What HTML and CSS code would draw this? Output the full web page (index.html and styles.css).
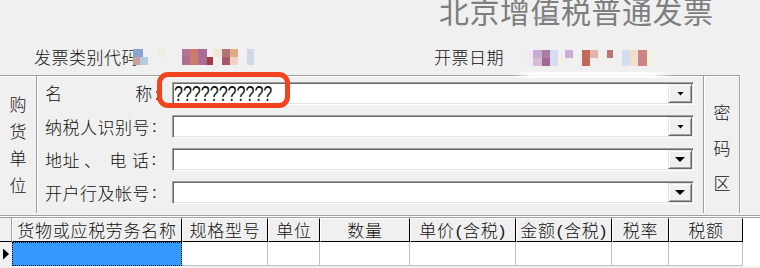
FILE: index.html
```html
<!DOCTYPE html>
<html lang="zh-CN">
<head>
<meta charset="utf-8">
<title>北京增值税普通发票</title>
<link rel="stylesheet" href="styles.css">
</head>
<body>
<div class="page">
  <div class="title-row">
    <h1 class="title">北京增<span class="zhi">值</span>税普通发票</h1>
  </div>

  <div class="info-row">
    <span class="code-label">发票类别代码</span>
    <svg class="mosaic-code" width="125" height="16" viewBox="0 0 125 16">
      <rect x="0" y="0" width="10" height="8" fill="#86a4cc"/>
      <rect x="0" y="8" width="7" height="8" fill="#c8a09c"/>
      <rect x="7" y="8" width="8" height="8" fill="#b4cce4"/>
      <rect x="25" y="0" width="8" height="8" fill="#eeeedc"/>
      <rect x="49" y="0" width="8" height="8" fill="#b47496"/>
      <rect x="49" y="8" width="8" height="8" fill="#b06c8c"/>
      <rect x="57" y="0" width="8" height="16" fill="#cc7c6c"/>
      <rect x="65" y="0" width="9" height="16" fill="#aa6c94"/>
      <rect x="74" y="8" width="6" height="8" fill="#a23c44"/>
      <rect x="80" y="0" width="9" height="8" fill="#f2e6d6"/>
      <rect x="89" y="0" width="8" height="8" fill="#b47474"/>
      <rect x="89" y="8" width="8" height="8" fill="#a85868"/>
      <rect x="97" y="0" width="8" height="8" fill="#e2a882"/>
      <rect x="97" y="8" width="8" height="8" fill="#eed4c4"/>
      <rect x="114" y="0" width="7" height="16" fill="#d2d8ea"/>
    </svg>
    <span class="date-label">开票日期</span>
    <svg class="mosaic-date" width="130" height="16" viewBox="0 0 130 16">
      <rect x="0" y="0" width="6" height="16" fill="#f2eaf2"/>
      <rect x="6" y="0" width="9" height="8" fill="#c4acd4"/>
      <rect x="6" y="8" width="9" height="8" fill="#d4bcd4"/>
      <rect x="15" y="0" width="8" height="8" fill="#ac7ca4"/>
      <rect x="15" y="8" width="8" height="8" fill="#a26892"/>
      <rect x="23" y="0" width="8" height="16" fill="#d4dcf2"/>
      <rect x="31" y="8" width="7" height="8" fill="#f2f2e2"/>
      <rect x="38" y="0" width="8" height="8" fill="#ccacd4"/>
      <rect x="55" y="0" width="8" height="16" fill="#c46858"/>
      <rect x="63" y="0" width="8" height="8" fill="#e4b4ac"/>
      <rect x="80" y="0" width="6" height="8" fill="#bc7474"/>
      <rect x="95" y="0" width="8" height="16" fill="#d4dcf2"/>
      <rect x="103" y="0" width="8" height="8" fill="#f2dec8"/>
      <rect x="103" y="8" width="8" height="8" fill="#f2e2cc"/>
      <rect x="111" y="0" width="9" height="16" fill="#cc8488"/>
      <rect x="120" y="0" width="6" height="16" fill="#f2f2de"/>
    </svg>
  </div>

  <div class="form-box">
    <div class="buyer">
      <span>购</span><span>货</span><span>单</span><span>位</span>
    </div>
    <div class="fields">
      <div class="field">
        <span class="label spread"><span>名</span><span>称<span class="colon">:</span></span></span>
        <div class="combo">
          <span class="combo-text"><span class="qs">???????????</span></span>
          <span class="drop"><span class="arr"></span></span>
        </div>
      </div>
      <div class="field">
        <span class="label"><span>纳税人识别号</span><span class="colon">:</span></span>
        <div class="combo">
          <span class="combo-text"></span>
          <span class="drop"><span class="arr"></span></span>
        </div>
      </div>
      <div class="field">
        <span class="label"><span>地址</span><span class="dun">、</span><span class="g1">电</span><span class="g2">话</span><span class="colon">:</span></span>
        <div class="combo">
          <span class="combo-text"></span>
          <span class="drop"><span class="arr big"></span></span>
        </div>
      </div>
      <div class="field">
        <span class="label"><span>开户行及帐号</span><span class="colon">:</span></span>
        <div class="combo">
          <span class="combo-text"></span>
          <span class="drop"><span class="arr big"></span></span>
        </div>
      </div>
    </div>
    <div class="cipher">
      <span>密</span><span>码</span><span>区</span>
    </div>
  </div>

  <div class="grid-sep"></div>
  <div class="grid">
    <div class="ih"></div>
    <div class="hc">货物或应税劳务名称</div>
    <div class="hc">规格型号</div>
    <div class="hc">单位</div>
    <div class="hc">数量</div>
    <div class="hc">单价<span class="p">(</span>含税<span class="p">)</span></div>
    <div class="hc">金额<span class="p">(</span>含税<span class="p">)</span></div>
    <div class="hc">税率</div>
    <div class="hc">税额</div>
    <div class="he"></div>

    <div class="id"><span class="tri"></span></div>
    <div class="dc sel"></div>
    <div class="dc"></div>
    <div class="dc"></div>
    <div class="dc"></div>
    <div class="dc"></div>
    <div class="dc"></div>
    <div class="dc"></div>
    <div class="dc"></div>
    <div class="de"></div>
  </div>

  <div class="streak"></div>
  <div class="annot"></div>
</div>
</body>
</html>
```

FILE: styles.css
```css
html, body {
  margin: 0;
  padding: 0;
}
body {
  background: #f0f0f0;
  width: 760px;
  height: 268px;
  overflow: hidden;
  font-family: "Noto Sans CJK SC", "Noto Sans", sans-serif;
  font-weight: 300;
  color: #111;
}
.page {
  position: relative;
  width: 760px;
  height: 268px;
  overflow: hidden;
}

/* title */
.title-row {
  display: flex;
  height: 30px;
  padding-left: 439px;
}
.title {
  margin: -5px 0 0;
  height: 30px;
  font-size: 30px;
  line-height: 30px;
  font-weight: 400;
  color: #7e7e7e;
  letter-spacing: 0.5px;
  white-space: nowrap;
}
.zhi {
  position: relative;
}
.zhi::after {
  content: "";
  position: absolute;
  left: 3px;
  top: 29px;
  width: 24px;
  height: 2px;
  background: linear-gradient(90deg, #8c8c8c, #d0d0d0);
}

/* info row */
.info-row {
  display: flex;
  align-items: flex-start;
  height: 45px;
  box-sizing: border-box;
  padding: 18px 0 0 34px;
  font-size: 17px;
  line-height: 17px;
  letter-spacing: 0.5px;
}
.code-label {
  width: 99px;
  white-space: nowrap;
}
.mosaic-code {
  display: block;
  margin-top: 1px;
  flex: none;
}
.date-label {
  margin-left: 176px;
  width: 93px;
  white-space: nowrap;
}
.mosaic-date {
  display: block;
  margin-top: 2px;
  flex: none;
}

/* form box */
.form-box {
  display: flex;
  width: 740px;
  height: 138px;
  box-sizing: border-box;
  border-top: 1px solid #a0a0a0;
  box-shadow: inset 0 1px #fff;
}
.buyer {
  width: 37px;
  box-sizing: border-box;
  border-right: 1px solid #a0a0a0;
  display: flex;
  flex-direction: column;
  align-items: center;
  justify-content: center;
  padding-bottom: 2px;
  font-size: 17px;
  line-height: 27px;
}
.fields {
  width: 667px;
  box-sizing: border-box;
  border-left: 1px solid #fff;
  border-right: 1px solid #a0a0a0;
  padding: 6px 0 0 7px;
  display: flex;
  flex-direction: column;
  gap: 10px;
}
.field {
  display: flex;
  align-items: center;
  height: 23px;
}
.label {
  width: 115px;
  margin-right: 12px;
  display: flex;
  font-size: 17px;
  line-height: 20px;
  letter-spacing: 0.5px;
  white-space: nowrap;
}
.label.spread {
  justify-content: space-between;
}
.colon {
  font-family: "Liberation Sans", sans-serif;
  margin-left: 2px;
}
.dun {
  padding-left: 4px;
}
.g1 {
  margin-left: 8px;
}
.g2 {
  margin-left: 5px;
}
.combo {
  width: 522px;
  height: 23px;
  box-sizing: border-box;
  display: flex;
  background: #fff;
  border: 1px solid;
  border-color: #a0a0a0 #fff #fff #a0a0a0;
  box-shadow: inset 1px 1px #696969, inset -1px -1px #e3e3e3;
  padding: 1px;
}
.combo-text {
  flex: 1;
  overflow: hidden;
  font-family: "Liberation Sans", sans-serif;
  font-weight: 400;
  font-size: 22px;
  line-height: 19px;
  white-space: nowrap;
}
.qs {
  display: inline-block;
  transform: scaleX(0.73);
  transform-origin: 0 50%;
}
.drop {
  width: 24px;
  flex: none;
  box-sizing: border-box;
  background: #f0f0f0;
  border: 1px solid;
  border-color: #e3e3e3 #696969 #696969 #e3e3e3;
  box-shadow: inset 1px 1px #fff, inset -1px -1px #a0a0a0;
  display: flex;
  align-items: center;
  justify-content: center;
}
.arr {
  width: 7px;
  height: 4px;
  background: #000;
  clip-path: polygon(0 0, 100% 0, 50% 100%);
  margin-left: 1px;
}
.arr.big {
  width: 10px;
  height: 5px;
  margin-left: 0;
}
.cipher {
  width: 36px;
  box-sizing: border-box;
  border-left: 1px solid #fff;
  border-right: 1px solid #a0a0a0;
  box-shadow: 1px 0 #fff;
  display: flex;
  flex-direction: column;
  align-items: center;
  justify-content: center;
  padding-top: 6px;
  font-size: 17px;
  line-height: 35.5px;
}

/* grid */
.grid-sep {
  margin-top: 2px;
  height: 3px;
  box-sizing: border-box;
  border-top: 1px solid #a0a0a0;
  border-bottom: 1px solid #a0a0a0;
  background: #fff;
}
.grid {
  display: grid;
  grid-template-columns: 12px 170px 86px 52px 90px 106px 96px 57px 74px 17px;
  grid-template-rows: 24px 24px;
  background: #fff;
}
.ih {
  background: #f0f0f0;
  border-right: 1px solid #a0a0a0;
  border-bottom: 1px solid #000;
}
.hc {
  box-sizing: border-box;
  background: #f0f0f0;
  border-top: 1px solid #fff;
  border-left: 1px solid #fff;
  border-right: 1px solid #000;
  border-bottom: 1px solid #000;
  text-align: center;
  font-size: 17px;
  line-height: 22px;
  letter-spacing: 0.7px;
  white-space: nowrap;
  overflow: hidden;
}
.p {
  font-family: "Liberation Sans", sans-serif;
  padding: 0 1px;
}
.he {
  background: #fff;
}
.id {
  background: #f0f0f0;
  display: flex;
  align-items: center;
  padding-left: 3px;
}
.tri {
  width: 6px;
  height: 11px;
  background: #000;
  clip-path: polygon(0 0, 100% 50%, 0 100%);
}
.dc {
  box-sizing: border-box;
  background: #fff;
  border-right: 1px solid #c0c0c0;
  border-bottom: 1px solid #c0c0c0;
}
.dc.sel {
  background: #3399ff;
  border: 1px dotted #000;
}
.de {
  background: #fff;
}

/* overlays */
.streak {
  position: absolute;
  left: 512px;
  top: 72px;
  width: 160px;
  height: 6px;
  border-radius: 3px;
  background: linear-gradient(90deg, rgba(255,255,255,0), rgba(255,255,255,0.9) 12%, rgba(255,255,255,0.9) 88%, rgba(255,255,255,0));
}
.annot {
  position: absolute;
  left: 157px;
  top: 72px;
  width: 133px;
  height: 36px;
  box-sizing: border-box;
  border: 5px solid #f2421e;
  border-radius: 11px;
}
```
